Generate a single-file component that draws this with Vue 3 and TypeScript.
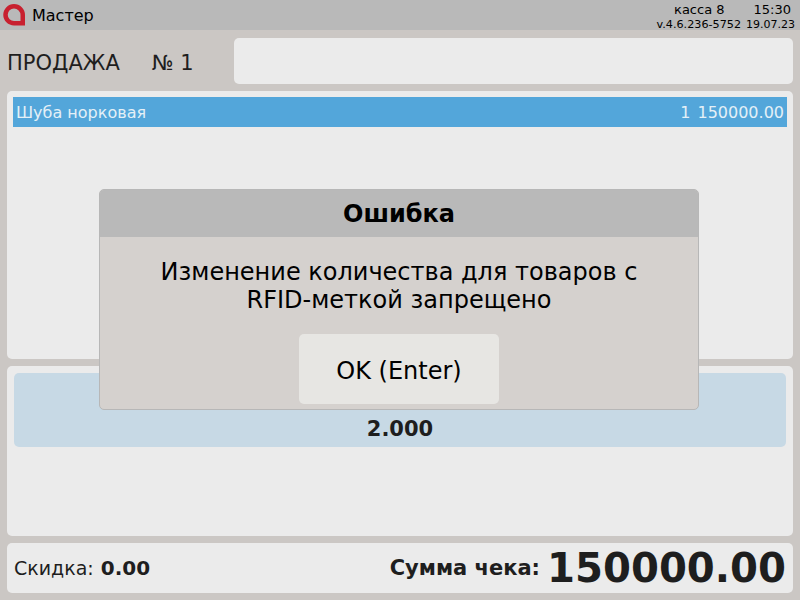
<template>
  <div class="screen">
    <header class="topbar">
      <div class="brand">
        <svg class="logo" width="22" height="22" viewBox="0 0 22 22">
          <path
            fill-rule="evenodd"
            d="M11 0a11 11 0 0 1 11 11v10.5H11a10.75 10.75 0 0 1 0-21.5zM11 4.5a6.25 6.25 0 0 0 0 12.5h6.5V11a6.5 6.5 0 0 0-6.5-6.5z"
            fill="#c8202f"
          />
        </svg>
        <span class="brand-name">Мастер</span>
      </div>
      <div class="info">
        <div class="info-top">
          <span>касса {{ register }}</span>
          <span class="time">{{ time }}</span>
        </div>
        <div class="info-bottom">
          <span>{{ version }}</span>
          <span class="date">{{ date }}</span>
        </div>
      </div>
    </header>

    <main class="content">
      <section class="title-row">
        <div class="title">
          <span>ПРОДАЖА</span>
          <span class="doc-number">№ 1</span>
        </div>
        <div class="search"></div>
      </section>

      <section class="panel items">
        <div v-for="item in items" :key="item.name" class="item selected">
          <span>{{ item.name }}</span>
          <span class="item-right">
            <span>{{ item.qty }}</span>
            <span>{{ item.price }}</span>
          </span>
        </div>
      </section>

      <section class="panel details">
        <div class="qty-box">2.000</div>
      </section>

      <section class="panel totals">
        <div class="discount">Скидка: <b>0.00</b></div>
        <div class="sum">
          <b class="sum-label">Сумма чека:</b>
          <b class="sum-value">150000.00</b>
        </div>
      </section>
    </main>

    <div class="dialog">
      <div class="dialog-head">Ошибка</div>
      <div class="dialog-body">
        <p class="dialog-text">Изменение количества для товаров с<br />RFID-меткой запрещено</p>
        <button type="button" class="ok-button">OK (Enter)</button>
      </div>
    </div>
  </div>
</template>

<script setup lang="ts">
const register = 8
const time = '15:30'
const version = 'v.4.6.236-5752'
const date = '19.07.23'

const items = [{ name: 'Шуба норковая', qty: 1, price: '150000.00' }]
</script>

<style>
html,
body {
  margin: 0;
  overflow: hidden;
}
</style>

<style scoped>
.screen {
  position: relative;
  width: 800px;
  height: 600px;
  display: flex;
  flex-direction: column;
  background: #cbc7c4;
  color: #1e1e1e;
  font-family: "DejaVu Sans", sans-serif;
  overflow: hidden;
}

.topbar {
  height: 30px;
  flex: none;
  display: flex;
  justify-content: space-between;
  align-items: center;
  background: #b9b9b9;
  color: #000;
}

.brand {
  display: flex;
  align-items: center;
  padding-left: 3px;
}

.logo {
  display: block;
}

.brand-name {
  margin-left: 7px;
  font-size: 16px;
}

.info {
  padding: 4px 5px 0 0;
  font-size: 11.2px;
  line-height: 15px;
}

.info-top {
  display: flex;
  justify-content: flex-end;
  padding-right: 4px;
  font-size: 13px;
}

.info-top .time {
  margin-left: 29px;
  font-size: 13px;
}

.info-bottom {
  display: flex;
  gap: 5px;
}

.date {
  font-size: 11px;
}

.content {
  flex: 1;
  min-height: 0;
  display: flex;
  flex-direction: column;
  gap: 7px;
  padding: 8px 7px 7px;
}

.title-row {
  height: 46px;
  flex: none;
  display: flex;
}

.title {
  width: 227px;
  flex: none;
  box-sizing: border-box;
  padding-top: 3px;
  display: flex;
  align-items: center;
  font-size: 21px;
}

.doc-number {
  margin-left: 32px;
}

.search {
  flex: 1;
  background: #ebebeb;
  border-radius: 5px;
}

.panel {
  background: #ebebeb;
  border-radius: 5px;
}

.items {
  height: 268px;
  flex: none;
  box-sizing: border-box;
  padding: 6px;
}

.item {
  height: 30px;
  display: flex;
  justify-content: space-between;
  align-items: center;
  padding: 0 3px;
  font-size: 16px;
}

.item.selected {
  background: #53a6da;
  color: #e4f0f7;
}

.item-right {
  display: flex;
  gap: 7px;
}

.details {
  height: 170px;
  flex: none;
  box-sizing: border-box;
  padding: 7px;
}

.qty-box {
  height: 74px;
  box-sizing: border-box;
  display: flex;
  justify-content: center;
  align-items: flex-end;
  padding-bottom: 6px;
  background: #c7d9e5;
  border-radius: 5px;
  font-size: 21px;
  font-weight: bold;
}

.totals {
  height: 50px;
  flex: none;
  display: flex;
  justify-content: space-between;
  align-items: center;
  padding: 0 7px;
}

.discount {
  font-size: 19px;
}

.discount b {
  margin-left: 1px;
  font-size: 20px;
}

.sum {
  display: flex;
  align-items: center;
  gap: 7px;
}

.sum-label {
  font-size: 21px;
}

.sum-value {
  font-size: 40.2px;
}

.dialog {
  position: absolute;
  left: 99px;
  top: 189px;
  width: 600px;
  height: 221px;
  box-sizing: border-box;
  display: flex;
  flex-direction: column;
  background: #d5d1ce;
  border: 1px solid #b7b7b7;
  border-radius: 5px;
  overflow: hidden;
  color: #000;
}

.dialog-head {
  height: 47px;
  flex: none;
  box-sizing: border-box;
  padding-top: 1px;
  display: flex;
  justify-content: center;
  align-items: center;
  background: #b9b9b9;
  font-size: 24px;
  font-weight: bold;
}

.dialog-body {
  flex: 1;
  display: flex;
  flex-direction: column;
  align-items: center;
}

.dialog-text {
  margin: 21px 0 0;
  font-size: 24px;
  line-height: 28px;
  text-align: center;
}

.ok-button {
  width: 200px;
  height: 70px;
  margin-top: 20px;
  padding: 3px 0 0;
  border: none;
  border-radius: 5px;
  background: #e7e6e3;
  color: #000;
  font-family: inherit;
  font-size: 24px;
}
</style>
